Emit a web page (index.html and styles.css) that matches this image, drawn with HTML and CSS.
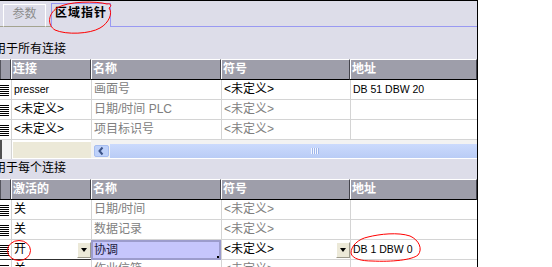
FILE: index.html
```html
<!DOCTYPE html>
<html>
<head>
<meta charset="utf-8">
<link rel="stylesheet" href="styles.css">
</head>
<body>
<div class="panel">
  <div class="tabs">
    <div class="tline w3"></div>
    <div class="tab">参数</div>
    <div class="tline w5"></div>
    <div class="tab active">区域指针</div>
    <div class="tline fill"></div>
  </div>

  <div class="label l1">用于所有连接</div>
  <div class="grid">
    <div class="h h0"></div><div class="h">连接</div><div class="h">名称</div><div class="h">符号</div><div class="h">地址</div>

    <div class="c sel"></div><div class="c"><span class="lat">presser</span></div><div class="c g">画面号</div><div class="c">&lt;未定义&gt;</div><div class="c"><span class="lat">DB 51 DBW 20</span></div>
    <div class="c sel"></div><div class="c">&lt;未定义&gt;</div><div class="c g">日期/时间 PLC</div><div class="c g">&lt;未定义&gt;</div><div class="c"></div>
    <div class="c sel"></div><div class="c">&lt;未定义&gt;</div><div class="c g">项目标识号</div><div class="c g">&lt;未定义&gt;</div><div class="c"></div>

    <div class="sc0"></div>
    <div class="sc1"><div class="beige"></div></div>
    <div class="sbar">
      <div class="sbtn"><svg width="13" height="10" viewBox="0 0 13 10"><polyline points="7.5,1.5 4.5,5 7.5,8.5" fill="none" stroke="#3d5488" stroke-width="2"/></svg></div>
      <div class="strack"><div class="grip"></div></div>
    </div>
  </div>

  <div class="label l2">用于每个连接</div>
  <div class="grid">
    <div class="h h0"></div><div class="h">激活的</div><div class="h">名称</div><div class="h">符号</div><div class="h">地址</div>

    <div class="c sel"></div><div class="c">关</div><div class="c g">日期/时间</div><div class="c g">&lt;未定义&gt;</div><div class="c"></div>
    <div class="c sel"></div><div class="c">关</div><div class="c g">数据记录</div><div class="c g">&lt;未定义&gt;</div><div class="c"></div>
    <div class="c sel cur"></div><div class="c cur">开<span class="dd"></span></div><div class="c hl">协调</div><div class="c">&lt;未定义&gt;<span class="dd"></span></div><div class="c"><span class="lat">DB 1 DBW 0</span></div>
    <div class="c sel"></div><div class="c">关</div><div class="c g">作业信箱</div><div class="c g">&lt;未定义&gt;</div><div class="c"></div>
  </div>
</div>

<svg class="marks" width="552" height="267" viewBox="0 0 552 267">
  <path d="M57 8 C68 1 96 1 107 4 C111 3 112 6 109 8 C113 13 109 23 100 28 C90 34 66 35 55 30 C47 25 48 14 57 8" fill="none" stroke="#f00" stroke-width="1"/>
  <ellipse cx="19" cy="250.5" rx="11.5" ry="10" fill="none" stroke="#f00" stroke-width="1"/>
  <path d="M368 237 C358 239 351 246 351 253 C352 259 362 261 372 261 C392 262 412 260 418 255 C423 249 419 240 410 236 C398 232 380 234 368 237" fill="none" stroke="#f00" stroke-width="1"/>
</svg>
</body>
</html>
```

FILE: styles.css
```css
* { box-sizing: border-box; }

body {
  margin: 0;
  width: 552px;
  height: 267px;
  overflow: hidden;
  background: #fff;
  position: relative;
  font-family: "Liberation Sans", "Noto Sans CJK SC", sans-serif;
  font-size: 12px;
  color: #000;
}

.panel {
  width: 478px;
  height: 267px;
  border-top: 1px solid #000;
  border-right: 1px solid #000;
  background: #dddde9;
  overflow: hidden;
  display: flex;
  flex-direction: column;
}

.tabs {
  flex: none;
  height: 26px;
  display: flex;
  align-items: flex-end;
}

.tline {
  align-self: stretch;
  border-bottom: 1px solid #a4a490;
}
.w3 { width: 3px; }
.w5 { width: 5px; }
.fill { flex: 1; border-bottom-color: #9999f2; }

.tab {
  flex: none;
  width: 43px;
  height: 23px;
  border: 1px solid #fff;
  border-bottom-color: #a4a490;
  color: #8c8c8c;
  text-align: center;
  line-height: 14px;
  padding-top: 2px;
}

.tab.active {
  width: 60px;
  height: 24px;
  border: 1px solid #9999f2;
  border-bottom: none;
  color: #000;
  font-weight: bold;
  letter-spacing: 1px;
  padding-top: 2px;
}

.label {
  flex: none;
  line-height: 14px;
  margin-left: -6px;
  white-space: nowrap;
}
.l1 { height: 32px; padding-top: 15px; }
.l2 { height: 20px; padding-top: 2px; }

.grid {
  flex: none;
  display: grid;
  grid-template-columns: 11px 80px 130px 129px 127px;
}

.h {
  height: 21px;
  background: #9e9eaa;
  border-top: 1px solid #fff;
  border-bottom: 1px solid #000;
  border-right: 1px solid #44444c;
  box-shadow: inset 1px 0 #fff;
  color: #fff;
  font-weight: bold;
  padding-left: 2px;
  line-height: 19px;
  white-space: nowrap;
}
.h0 { box-shadow: inset 1px 0 #55555d; }

.c {
  height: 20px;
  background: #fff;
  border-bottom: 1px solid #d4d4d4;
  border-left: 1px solid #d4d4d4;
  padding-left: 2px;
  line-height: 19px;
  white-space: nowrap;
  overflow: hidden;
  display: flex;
  align-items: center;
}

.sel {
  border-left: none;
  padding: 0;
  align-items: flex-start;
}
.sel::before {
  content: "";
  width: 9px;
  height: 11px;
  margin-top: 5px;
  background: repeating-linear-gradient(#000 0 1px, #fff 1px 2px);
}

.g { color: #808080; }
.lat { font-size: 10.5px; }

.cur { border-bottom-color: #303030; }

.dd {
  flex: none;
  margin-left: auto;
  width: 14px;
  height: 16px;
  background: #ece9d8;
  border: 1px solid;
  border-color: #fff #9d9a8c #9d9a8c #fff;
  display: flex;
  align-items: center;
  justify-content: center;
}
.dd::before {
  content: "";
  border-left: 3.5px solid transparent;
  border-right: 3.5px solid transparent;
  border-top: 4px solid #000;
}

.hl {
  position: relative;
  background: #c6c6fc;
  border: 2px solid #9c9ccc;
  padding-left: 1px;
  color: #1c1c3c;
}
.hl::after {
  content: "";
  position: absolute;
  right: -1px;
  bottom: -1px;
  width: 3px;
  height: 3px;
  background: #000;
}

.sc0 {
  height: 19px;
  background: #f4f4f4;
  box-shadow: inset 2px 0 #505050;
}
.sc1 {
  height: 19px;
  background: #fff;
  padding: 2px 0 1px 1px;
  border-left: 1px solid #d4d4d4;
}
.beige {
  height: 16px;
  background: #ece9d8;
}

.sbar {
  grid-column: 3 / 6;
  height: 19px;
  background: #f2f2f2;
  padding: 4px 0 0 3px;
  border-bottom: 1px solid #fff;
  display: flex;
  gap: 1px;
}
.sbtn {
  flex: none;
  width: 15px;
  height: 12px;
  margin-top: 1px;
  border-radius: 2px;
  background: #bed1fa;
  border: 1px solid #a6bdf0;
  display: flex;
}
.strack {
  flex: 1;
  height: 14px;
  background: linear-gradient(#cbdafd, #b9ccf6);
  display: flex;
  align-items: center;
}
.grip {
  margin-left: 201px;
  width: 8px;
  height: 6px;
  background: repeating-linear-gradient(to right, #f4f7ff 0 1px, #9fb6ea 1px 2px);
}

.marks {
  position: absolute;
  left: 0;
  top: 0;
  pointer-events: none;
}
```
